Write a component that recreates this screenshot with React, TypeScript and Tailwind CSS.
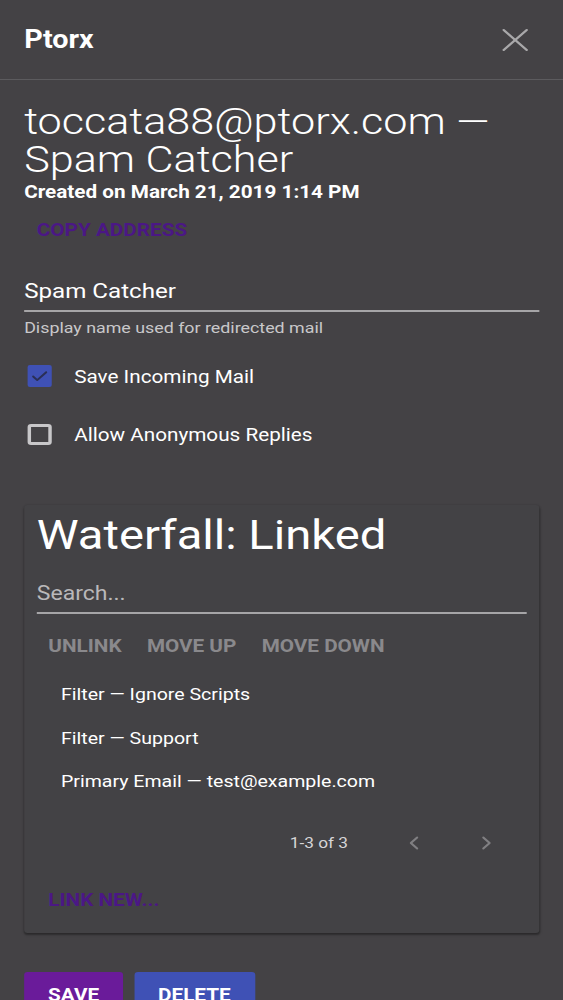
import React from 'react';
import { X, ChevronLeft, ChevronRight, Check } from 'lucide-react';

const links = ['Filter — Ignore Scripts', 'Filter — Support', 'Primary Email — test@example.com'];

// The capture is a phone view stretched sideways, so the page is laid out at 490px and widened.
const App: React.FC = () => {
  return (
    <div className="min-h-screen bg-[#444245] text-white font-['Roboto',sans-serif] overflow-hidden">
      <div className="w-[490px] origin-top-left scale-x-[1.15]">
        {/* Header */}
        <div className="h-[80px] pl-[21px] pr-[22px] flex items-center justify-between border-b border-[#5c5b5e]">
          <h1 className="text-[25px] font-bold">Ptorx</h1>
          <X className="w-[40px] h-[46px] text-[#a9a8aa]" strokeWidth={1.25} />
        </div>

        <div className="px-[21px] pt-[22px]">
          <h2 className="text-[37.5px] font-light leading-[38px]">toccata88@ptorx.com —<br />Spam Catcher</h2>
          <p className="text-[18px] font-bold leading-[22px] mt-[3px]">Created on March 21, 2019 1:14 PM</p>
          <button className="block mt-[16px] ml-[11px] text-[18px] font-bold uppercase text-[#4b1785] leading-[22px]">Copy Address</button>

          {/* Display name */}
          <div className="mt-[37px]">
            <div className="text-[21px] leading-[26px] pb-[6px] border-b-2 border-[#a6a5a7]">Spam Catcher</div>
            <p className="text-[15.5px] text-[#c9c8ca] mt-[7px] leading-[18px]">Display name used for redirected mail</p>
          </div>

          {/* Checkboxes */}
          <div className="mt-[27px] h-[24px] flex items-center gap-[20px]">
            <div className="ml-[2.5px] w-[21px] h-[22px] rounded-[2px] bg-[#3f51b5] flex items-center justify-center">
              <Check className="w-[17px] h-[17px] text-[#2a2f55]" strokeWidth={2.5} />
            </div>
            <span className="text-[18px]">Save Incoming Mail</span>
          </div>
          <div className="mt-[34px] h-[24px] flex items-center gap-[20px]">
            <div className="ml-[2.5px] w-[21px] h-[21px] rounded-[3px] border-[3px] border-[#c8c7c9]" />
            <span className="text-[18px]">Allow Anonymous Replies</span>
          </div>

          {/* Waterfall card */}
          <div className="mt-[59px] bg-[#434245] rounded-[3px] shadow-[0_2px_2px_rgba(0,0,0,0.35),0_0_2px_rgba(0,0,0,0.12)] px-[11px] pt-[6px] pb-[22px]">
            <h3 className="text-[41px] leading-[48px]">Waterfall: Linked</h3>
            <div className="mt-[22px] text-[20px] leading-[24px] text-[#b9b8ba] pb-[7px] border-b-2 border-[#a6a5a7]">Search...</div>
            <div className="mt-[14px] flex gap-[22px] text-[18px] leading-[24px] font-bold uppercase text-[#8a898c] pl-[10px]">
              <span className="py-[6px]">Unlink</span>
              <span className="py-[6px]">Move Up</span>
              <span className="py-[6px]">Move Down</span>
            </div>
            <ul className="mt-[9px] pl-[21px] text-[17px]">
              {links.map(l => (
                <li key={l} className="h-[43.5px] flex items-center">{l}</li>
              ))}
            </ul>
            <div className="mt-[27.5px] h-[24px] flex items-center text-[15px] text-[#d6d5d7]">
              <span className="ml-[220px]">1-3 of 3</span>
              <ChevronLeft className="ml-[46px] w-[22px] h-[24px] text-[#807f82]" />
              <ChevronRight className="ml-[41px] w-[22px] h-[24px] text-[#807f82]" />
            </div>
            <button className="block mt-[34px] ml-[10px] text-[18px] leading-[22px] font-bold uppercase text-[#4b1785]">Link New...</button>
          </div>

          {/* Actions */}
          <div className="mt-[39px] flex gap-[9.5px]">
            <button className="w-[86px] h-[42px] rounded-[3px] bg-[#6a1b9a] text-[18px] font-bold uppercase flex items-center justify-center pt-[2px]">Save</button>
            <button className="w-[105px] h-[42px] rounded-[3px] bg-[#3f51b5] text-[18px] font-bold uppercase flex items-center justify-center pt-[2px]">Delete</button>
          </div>
        </div>
      </div>
    </div>
  );
};

export default App;
